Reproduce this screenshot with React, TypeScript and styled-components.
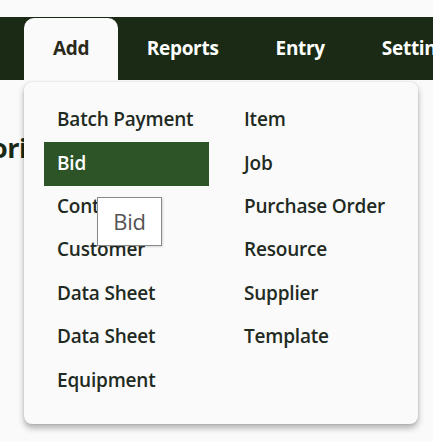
import React from "react";
import styled, { createGlobalStyle } from "styled-components";

const GlobalStyle = createGlobalStyle`
  html, body {
    margin: 0;
    padding: 0;
    background: #fafafa;
    font-family: "Open Sans", "Noto Sans", sans-serif;
    overflow: hidden;
  }
`;

const navItems = ["Add", "Reports", "Entry", "Settings"];

const addLeft = [
  "Batch Payment",
  "Bid",
  "Contact",
  "Customer",
  "Data Sheet",
  "Data Sheet",
  "Equipment",
];
const addRight = ["Item", "Job", "Purchase Order", "Resource", "Supplier", "Template"];

export default function App() {
  return (
    <>
      <GlobalStyle />
      <Page>
        <NavBar>
          {navItems.map((item) => (
            <NavTab key={item} $active={item === "Add"}>
              {item}
              {item === "Add" && (
                <Dropdown>
                  <MenuGrid>
                    {[...addLeft, ...addRight].map((label, i) => (
                      <MenuItem key={i} $selected={label === "Bid"}>
                        {label}
                      </MenuItem>
                    ))}
                  </MenuGrid>
                  <Tooltip>Bid</Tooltip>
                </Dropdown>
              )}
            </NavTab>
          ))}
        </NavBar>
        <Content>
          <Heading>Priorities</Heading>
        </Content>
      </Page>
    </>
  );
}

const Page = styled.div`
  width: 433px;
  height: 442px;
  padding-top: 17px;
  box-sizing: border-box;
  overflow: hidden;
`;

const NavBar = styled.nav`
  height: 63px;
  background: #1a2a14;
  display: flex;
  align-items: stretch;
  padding-left: 24px;
  white-space: nowrap;
`;

const NavTab = styled.div<{ $active: boolean }>`
  position: relative;
  display: flex;
  align-items: center;
  padding: 0 ${({ $active }) => ($active ? "29px" : "28.5px")} 2px;
  font-size: 19px;
  font-weight: 700;
  letter-spacing: -0.3px;
  color: ${({ $active }) => ($active ? "#2a2a1c" : "#ffffff")};
  background: ${({ $active }) => ($active ? "#fafafa" : "transparent")};
  border-radius: ${({ $active }) => ($active ? "10px 10px 0 0" : "0")};
  margin-top: ${({ $active }) => ($active ? "1px" : "0")};
`;

const Dropdown = styled.div`
  position: absolute;
  top: calc(100% + 2px);
  left: 0;
  width: 394px;
  box-sizing: border-box;
  padding: 17px 22px 21px 20px;
  background: #fafafa;
  border-radius: 8px;
  box-shadow: 0 4px 6px rgba(0, 0, 0, 0.3), 0 0 2px rgba(0, 0, 0, 0.14);
  z-index: 10;
`;

const MenuGrid = styled.div`
  display: grid;
  grid-template-columns: 165px 165px;
  grid-template-rows: repeat(7, 43.4px);
  grid-auto-flow: column;
  column-gap: 22px;
`;

const MenuItem = styled.div<{ $selected: boolean }>`
  display: flex;
  align-items: center;
  padding: 0 13px 3px;
  font-size: 19px;
  font-weight: 600;
  letter-spacing: -0.2px;
  white-space: nowrap;
  color: ${({ $selected }) => ($selected ? "#ffffff" : "#1f2a22")};
  background: ${({ $selected }) => ($selected ? "#2c5427" : "transparent")};
`;

const Tooltip = styled.div`
  position: absolute;
  left: 73px;
  top: 115px;
  width: 65px;
  height: 49px;
  box-sizing: border-box;
  display: flex;
  align-items: center;
  justify-content: center;
  padding-bottom: 2px;
  background: #ffffff;
  border: 1px solid #8a8a8a;
  box-shadow: 1px 1px 2px rgba(0, 0, 0, 0.15);
  font-size: 22px;
  font-weight: 400;
  color: #555555;
`;

const Content = styled.main`
  padding: 54px 0 0;
`;

/* page title sits partly scrolled off the left edge */
const Heading = styled.h1`
  margin: 0;
  font-size: 27px;
  font-weight: 700;
  color: #1a2a14;
  line-height: 1;
  white-space: nowrap;
  letter-spacing: -0.5px;
  text-indent: -45px;
`;
